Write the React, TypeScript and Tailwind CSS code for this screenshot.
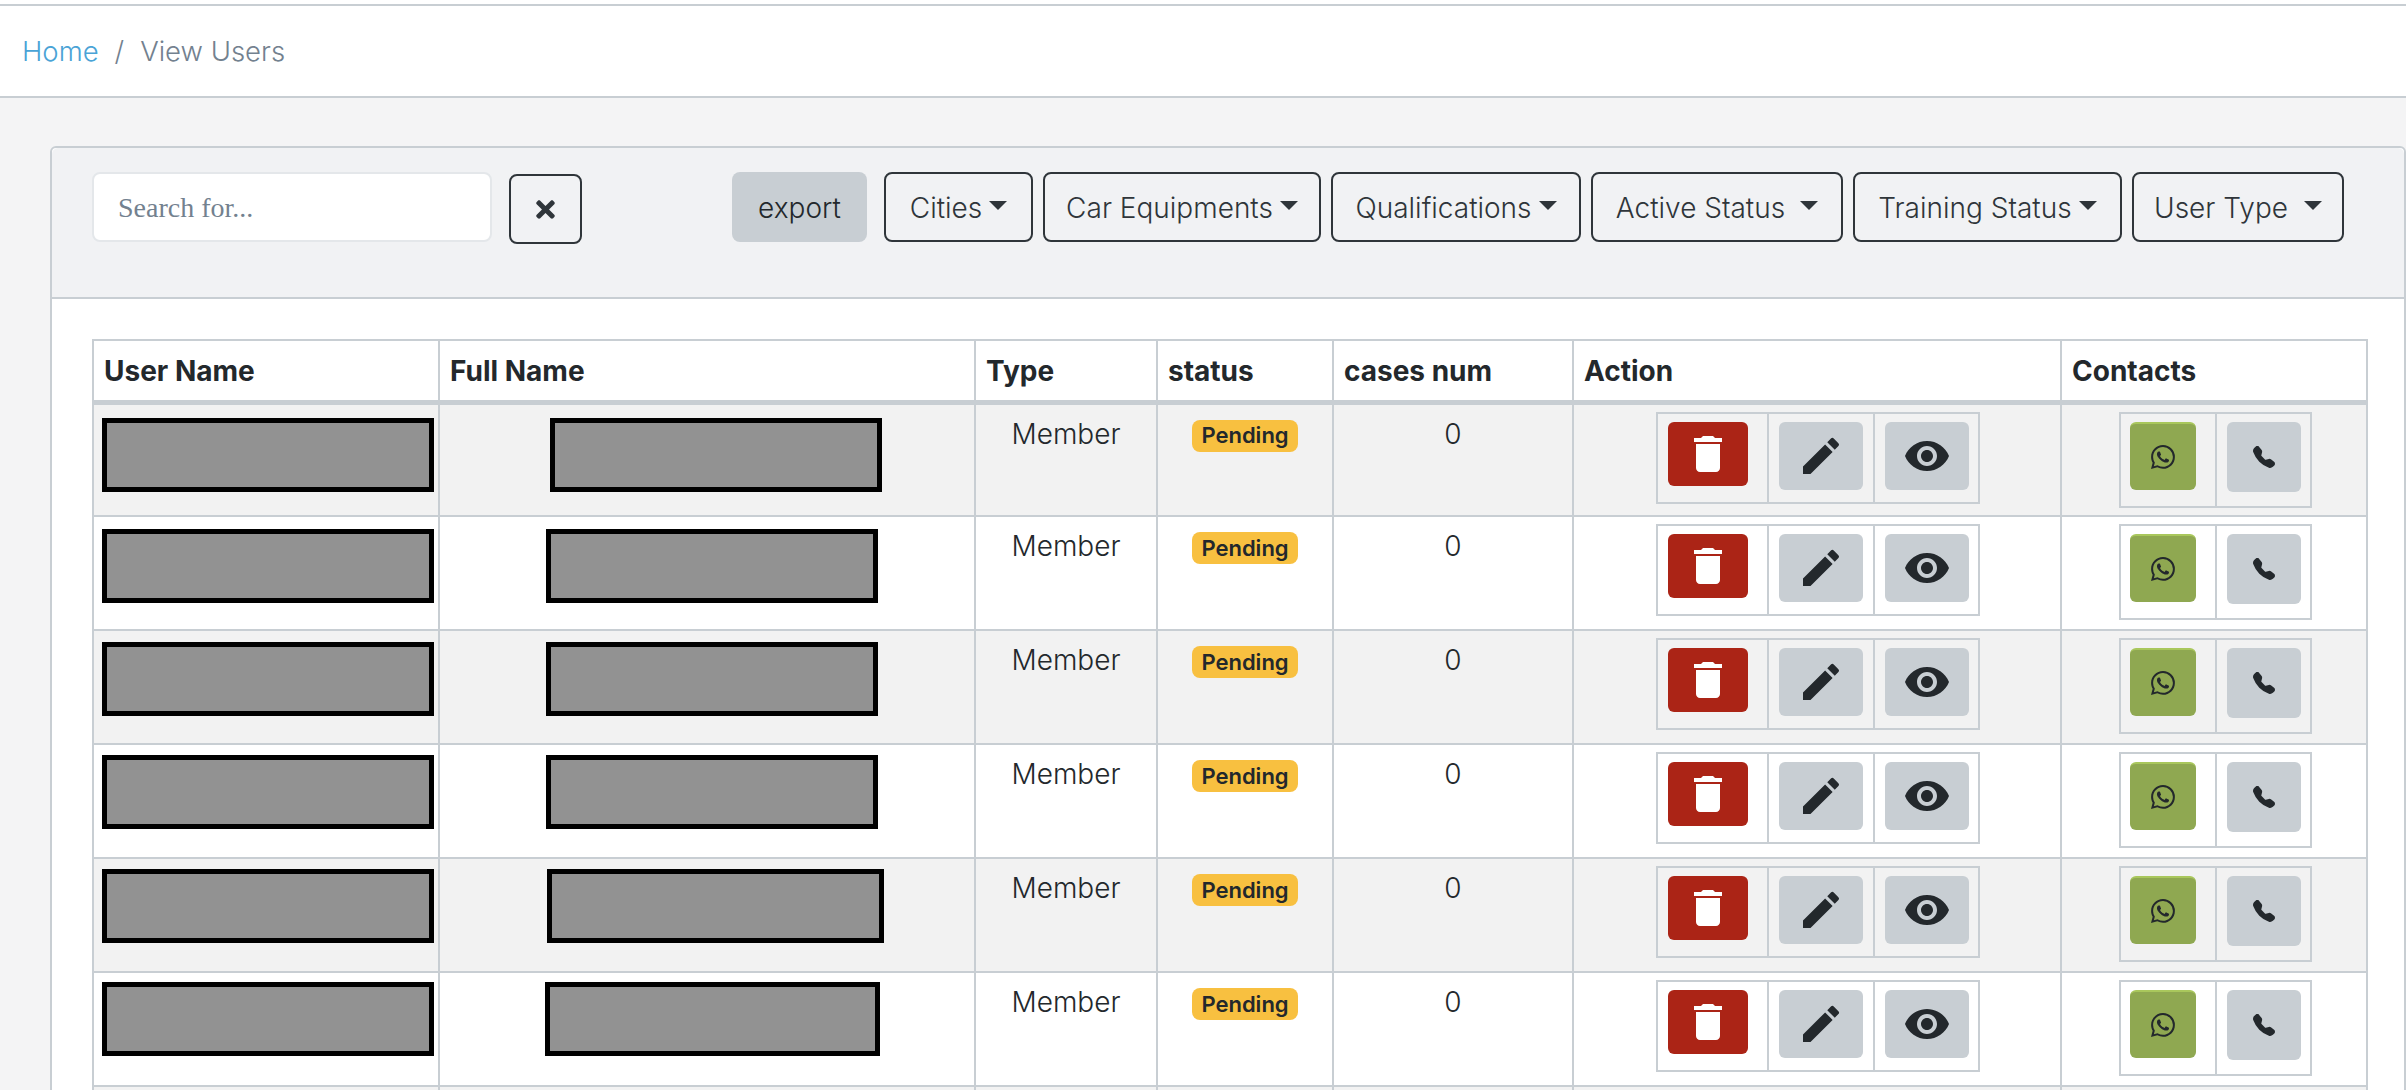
import { FaTimes } from "react-icons/fa";
import { MdDelete, MdEdit, MdVisibility } from "react-icons/md";
import { BsTelephoneFill, BsWhatsapp } from "react-icons/bs";

type Filter = { label: string; width: string; caretGap: string };

const FILTERS: Filter[] = [
  { label: "Cities", width: "w-[149px]", caretGap: "ml-[7px]" },
  { label: "Car Equipments", width: "w-[278px]", caretGap: "ml-[7px]" },
  { label: "Qualifications", width: "w-[250px]", caretGap: "ml-[7px]" },
  { label: "Active Status", width: "w-[252px]", caretGap: "ml-[15px]" },
  { label: "Training Status", width: "w-[269px]", caretGap: "ml-[7px]" },
  { label: "User Type", width: "w-[212px]", caretGap: "ml-[16px]" },
];

// the masked boxes sit at slightly different spots in every row
const ROWS = [
  { top: "mt-[13px]", fullLeft: "ml-[110px]", fullWidth: "w-[332px]" },
  { top: "mt-[12px]", fullLeft: "ml-[106px]", fullWidth: "w-[332px]" },
  { top: "mt-[11px]", fullLeft: "ml-[106px]", fullWidth: "w-[332px]" },
  { top: "mt-[10px]", fullLeft: "ml-[106px]", fullWidth: "w-[332px]" },
  { top: "mt-[10px]", fullLeft: "ml-[107px]", fullWidth: "w-[337px]" },
  { top: "mt-[9px]", fullLeft: "ml-[105px]", fullWidth: "w-[335px]" },
];

const HEADERS = ["User Name", "Full Name", "Type", "status", "cases num", "Action", "Contacts"];

function Masked({ className }: { className: string }) {
  return <div className={`h-[74px] border-[5px] border-black bg-[#929292] ${className}`} />;
}

export default function App() {
  return (
    <div className="h-[1090px] overflow-hidden bg-[#f4f4f5] font-['Inter',sans-serif] text-[28px] text-[#23282c]">
      {/* Breadcrumb */}
      <div className="h-[98px] border-b-2 border-[#c8ced3] bg-white pt-[4px]">
        <div className="flex h-[92px] items-center border-t-2 border-[#c8ced3] pl-[22px] pt-[2px] text-[27.5px] font-light">
          <span className="text-[#4aa3d6]">Home</span>
          <span className="mx-[16px] text-[#73818f]">/</span>
          <span className="text-[#73818f]">View Users</span>
        </div>
      </div>

      {/* Card */}
      <div className="ml-[50px] mt-[48px] rounded-t-[6px] border-2 border-[#c8ced3] bg-white">
        <div className="flex h-[151px] items-start rounded-t-[6px] border-b-2 border-[#c8ced3] bg-[#f1f2f4] pl-[40px] pt-[24px] font-light">
          <input
            type="text"
            placeholder="Search for..."
            className="h-[70px] w-[400px] rounded-[8px] border-2 border-[#e4e7ea] bg-white px-[24px] pt-[2px] font-['Liberation_Serif',serif] text-[28px] placeholder:text-[#73818f]"
          />
          <button className="ml-[17px] mt-[2px] flex h-[70px] w-[73px] items-center justify-center rounded-[8px] border-2 border-[#2f353a] text-[#2f353a]">
            <FaTimes size={27} />
          </button>
          <button className="ml-[150px] h-[70px] w-[135px] rounded-[8px] bg-[#c8ced3] pt-[1px]">export</button>
          <div className="ml-[17px] flex gap-[10px]">
            {FILTERS.map((f) => (
              <button
                key={f.label}
                className={`flex h-[70px] items-center justify-center rounded-[8px] border-2 border-[#2f353a] pt-[1px] text-[#2f353a] ${f.width}`}
              >
                {f.label}
                <span className={`mb-[4px] border-x-[9px] border-t-[9px] border-x-transparent border-t-[#2f353a] ${f.caretGap}`} />
              </button>
            ))}
          </div>
        </div>

        {/* Table */}
        <div className="pl-[40px] pt-[40px]">
          <table className="w-[2274px] table-fixed border-collapse">
            <colgroup>
              <col className="w-[346px]" />
              <col className="w-[536px]" />
              <col className="w-[182px]" />
              <col className="w-[176px]" />
              <col className="w-[240px]" />
              <col className="w-[488px]" />
              <col className="w-[306px]" />
            </colgroup>
            <thead>
              <tr className="h-[62px]">
                {HEADERS.map((h) => (
                  <th key={h} className="border-2 border-b-[5px] border-[#c8ced3] pl-[10px] pt-[2px] text-left font-bold">
                    {h}
                  </th>
                ))}
              </tr>
            </thead>
            <tbody>
              {ROWS.map((r, i) => (
                <tr key={i} className={`h-[114px] ${i % 2 === 0 ? "bg-[#f2f2f2]" : ""}`}>
                  <td className="border-2 border-[#c8ced3] align-top">
                    <Masked className={`ml-[8px] w-[332px] ${r.top}`} />
                  </td>
                  <td className="border-2 border-[#c8ced3] align-top">
                    <Masked className={`${r.fullLeft} ${r.fullWidth} ${r.top}`} />
                  </td>
                  <td className="border-2 border-[#c8ced3] pt-[8px] text-center align-top font-light">Member</td>
                  <td className="border-2 border-[#c8ced3] pl-[34px] pt-[15px] align-top">
                    <span className="flex h-[32px] w-[106px] items-center justify-center rounded-[8px] bg-[#f8c040] text-[22px] font-semibold">
                      Pending
                    </span>
                  </td>
                  <td className="border-2 border-[#c8ced3] pt-[8px] text-center align-top font-light">0</td>
                  <td className="border-2 border-[#c8ced3] pl-[82px] pt-[7px] align-top">
                    <div className="flex h-[92px] w-[324px] border-2 border-[#c8ced3]">
                      <div className="w-[111px] border-r-2 border-[#c8ced3] pl-[10px] pt-[8px]">
                        <button className="flex h-[64px] w-[80px] items-center justify-center rounded-[6px] bg-[#ab2416] text-white">
                          <MdDelete size={48} />
                        </button>
                      </div>
                      <div className="w-[106px] border-r-2 border-[#c8ced3] pl-[10px] pt-[8px]">
                        <button className="flex h-[68px] w-[84px] items-center justify-center rounded-[6px] bg-[#c8ced3]">
                          <MdEdit size={48} />
                        </button>
                      </div>
                      <div className="pl-[10px] pt-[8px]">
                        <button className="flex h-[68px] w-[84px] items-center justify-center rounded-[6px] bg-[#c8ced3]">
                          <MdVisibility size={48} />
                        </button>
                      </div>
                    </div>
                  </td>
                  <td className="border-2 border-[#c8ced3] pl-[57px] pt-[7px] align-top">
                    <div className="flex h-[96px] w-[193px] border-2 border-[#c8ced3]">
                      <div className="w-[96px] border-r-2 border-[#c8ced3] pl-[9px] pt-[8px]">
                        <button className="flex h-[68px] w-[66px] items-center justify-center rounded-[6px] border-t-2 border-[#a9c75c] bg-[#8fa851]">
                          <BsWhatsapp size={24} />
                        </button>
                      </div>
                      <div className="pl-[10px] pt-[8px]">
                        <button className="flex h-[70px] w-[74px] items-center justify-center rounded-[6px] bg-[#c8ced3]">
                          <BsTelephoneFill size={22} />
                        </button>
                      </div>
                    </div>
                  </td>
                </tr>
              ))}
              <tr className="h-[114px] bg-[#f2f2f2]">
                {HEADERS.map((h) => (
                  <td key={h} className="border-2 border-[#c8ced3]" />
                ))}
              </tr>
            </tbody>
          </table>
        </div>
      </div>
    </div>
  );
}
